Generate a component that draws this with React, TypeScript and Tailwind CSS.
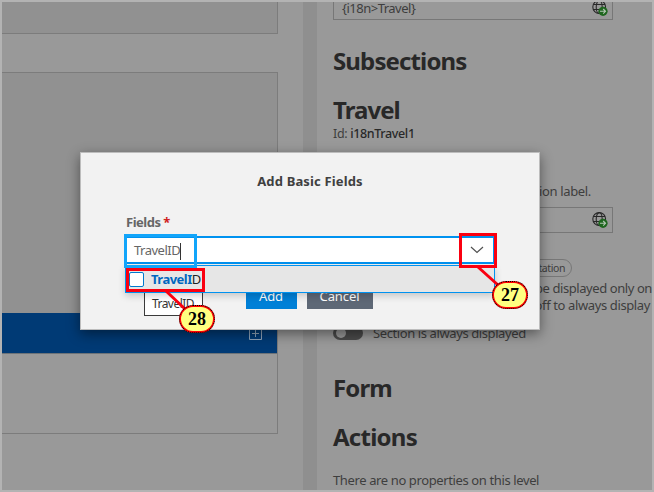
import React from "react";

function GlobeIcon({ className = "" }: { className?: string }) {
  return (
    <svg className={`h-4 w-4 shrink-0 ${className}`} viewBox="0 0 16 16" fill="none">
      <g stroke="#282828" strokeWidth="1.1">
        <circle cx="7.2" cy="7" r="6.4" />
        <ellipse cx="7.2" cy="7" rx="3" ry="6.4" />
        <path d="M1.4 4.5h11.6M1.4 9.5h11.6" />
      </g>
      <circle cx="11" cy="11.3" r="4.6" fill="#1f661f" />
      <path d="M8 11.3h5.4M11.2 9l2.3 2.3-2.3 2.3" stroke="#b4c8b4" strokeWidth="1.1" />
    </svg>
  );
}

function Heading({ children, className = "" }: { children: React.ReactNode; className?: string }) {
  return <h2 className={`h-8 shrink-0 text-[24px] leading-8 font-bold text-[#282828] ${className}`}>{children}</h2>;
}

function Outline() {
  return (
    <div className="flex w-[301px] shrink-0 flex-col bg-[#999999]">
      <div className="h-8 w-[276px] border-r border-b border-[#7c7c7c] bg-[#919191]" />
      <div className="mt-[38px] flex h-[362px] w-[276px] flex-col border-y border-r border-[#7c7c7c]">
        <div className="h-[240px] bg-[#919191]" />
        <div className="flex h-[41px] items-center justify-end border-b border-[#6d7378] bg-[#003a75] pr-[15px]">
          <svg className="h-[13px] w-[13px]" viewBox="0 0 13 13" fill="none" stroke="#8fa3b8">
            <path d="M.5.5h12v12H.5zM6.5 3v7M3 6.5h7" />
          </svg>
        </div>
      </div>
    </div>
  );
}

function Properties() {
  return (
    <div className="flex min-w-0 flex-1 flex-col pl-4 text-[13px] whitespace-nowrap text-[#3e3e3e]">
      <div className="flex h-[18px] w-[280px] shrink-0 items-end justify-between border-x border-b border-[#777777] pr-[4px] pb-[3px] pl-2 leading-[16px]">
        <span className="tracking-[-0.5px]">{"{i18n>Travel}"}</span>
        <GlobeIcon />
      </div>
      <Heading className="mt-[25px] tracking-[-0.87px]">Subsections</Heading>
      <Heading className="mt-[17px] tracking-[-0.95px]">Travel</Heading>
      <p className="h-4 shrink-0 text-[12.5px] leading-4 tracking-[-0.35px]">
        Id: <span className="font-medium text-[#282828]">i18nTravel1</span>
      </p>
      <p className="mt-[41px] h-4 w-[258px] shrink-0 text-right leading-4 tracking-[-0.35px]">Section label.</p>
      <div className="mt-[8px] flex h-[26px] w-[280px] shrink-0 items-center justify-end border border-[#777777] pr-[4px]">
        <GlobeIcon />
      </div>
      <div className="mt-[26px] flex h-[18px] w-[239px] shrink-0 justify-end">
        <span className="rounded-full border border-[#777777] px-[6px] text-[10.5px] leading-[16px] tracking-[-0.4px]">Annotation</span>
      </div>
      <p className="mt-[3px] h-[17px] w-[319px] shrink-0 text-right leading-[17px] tracking-[-0.42px]">The section will be displayed only on</p>
      <p className="h-[17px] w-[317px] shrink-0 text-right leading-[17px] tracking-[-0.38px]">selection. Switch off to always display</p>
      <div className="mt-[12px] flex h-4 shrink-0 items-center gap-[10px]">
        <span className="mb-[2px] flex h-[14px] w-[30px] items-center rounded-full bg-[#4a4a4a] px-[3px]">
          <span className="h-[10px] w-[10px] rounded-full bg-[#999999]" />
        </span>
        <span className="tracking-[-0.4px]">Section is always displayed</span>
      </div>
      <Heading className="mt-[30px] tracking-[-0.9px]">Form</Heading>
      <Heading className="mt-[17px] tracking-[-0.75px]">Actions</Heading>
      <p className="mt-[19px] h-4 shrink-0 leading-4 tracking-[-0.38px]">There are no properties on this level</p>
    </div>
  );
}

function AddFieldsDialog() {
  return (
    <div className="absolute top-[152px] left-[80px] flex h-[178px] w-[460px] flex-col border border-[#bdbdbd] bg-[#f2f2f2] px-11 shadow-[0_4px_12px_rgba(0,0,0,0.45)]">
      <h1 className="mt-5 h-4 text-center text-[13px] leading-4 font-bold tracking-[0.15px] text-[#404040]">Add Basic Fields</h1>
      <p className="mt-[25px] ml-px h-4 text-[13px] leading-4 font-bold tracking-[-0.5px] text-[#666666]">
        Fields <span className="text-[#d02020]">*</span>
      </p>
      <div className="mt-[6px] flex h-[28px] w-[370px] items-center justify-between border-2 border-[#0092f0] bg-white pr-[8px] pl-[7px]">
        <span className="flex h-4 items-center pt-[2px] text-[13px] tracking-[-0.5px] text-[#666666]">
          TravelID<span className="h-[17px] w-px bg-[#333333]" />
        </span>
        <svg className="h-3 w-4" viewBox="0 0 16 12" fill="none" stroke="#505050" strokeWidth="1.2">
          <path d="M2 3l6 5.5L14 3" />
        </svg>
      </div>
      <div className="mt-[20px] -ml-[2px] flex h-[25px] justify-center gap-[10px] text-[13px] leading-[23px] tracking-[-0.1px] text-white">
        <button className="w-[51px] bg-[#0080d7]">Add</button>
        <button className="w-[66px] bg-[#5e6876]">Cancel</button>
      </div>
      <div className="absolute top-[139px] left-[63px] flex h-[24px] w-[59px] items-center border border-t-0 border-[#3b3b3b] bg-white pl-[7px] text-[12px] tracking-[-0.55px] text-[#333333]">
        TravelID
      </div>
      <div className="absolute top-[112px] left-[44px] flex h-[28px] w-[370px] items-center border border-[#0092f0] bg-[#e6e6e6] pl-[3px] shadow-[0_3px_7px_rgba(0,0,0,0.18)]">
        <span className="h-[15px] w-[15px] rounded-[2px] border border-[#0079ce] bg-white" />
        <span className="ml-[7px] pt-[2px] text-[13px] font-bold tracking-[-0.5px] text-[#0066bf]">
          TravelI<span className="font-normal text-[#222222]">D</span>
        </span>
      </div>
    </div>
  );
}

function Badge({ label, className }: { label: string; className: string }) {
  return (
    <div className={`absolute flex h-[28px] w-[36px] items-center justify-center rounded-[14px] border border-dotted border-black bg-[#ff0000] p-px ${className}`}>
      <span className="flex h-full w-full items-center justify-center rounded-[12px] bg-[#ffff80] font-['Liberation_Serif',serif] text-[18px] leading-none font-bold text-black">
        {label}
      </span>
    </div>
  );
}

function Callouts() {
  return (
    <>
      <div className="absolute top-[234px] left-[124px] h-[34px] w-[73px] border-3 border-[#12a5fa]" />
      <div className="absolute top-[268px] left-[126px] h-[24px] w-[79px] border-3 border-[#fa0010]" />
      <div className="absolute top-[233px] left-[459px] h-[35px] w-[38px] border-3 border-[#fa0010]" />
      <svg className="absolute top-0 left-0 h-[492px] w-[654px]" viewBox="0 0 654 492" stroke="#fa0010" strokeWidth="3">
        <path d="M478 267l20 18M166 291l19 18" />
      </svg>
      <Badge label="27" className="top-[281px] left-[492px]" />
      <Badge label="28" className="top-[305px] left-[179px]" />
    </>
  );
}

export default function App() {
  return (
    <main className="relative h-[492px] w-[654px] overflow-hidden border-2 border-[#b3b3b3] bg-[#999999] font-['Noto_Sans','Open_Sans',sans-serif]">
      <div className="flex h-full">
        <Outline />
        <div className="w-[14px] shrink-0 bg-[#8f8f8f]" />
        <Properties />
      </div>
      <div className="absolute -top-[2px] -left-[2px] h-[492px] w-[654px]">
        <AddFieldsDialog />
        <Callouts />
      </div>
    </main>
  );
}
